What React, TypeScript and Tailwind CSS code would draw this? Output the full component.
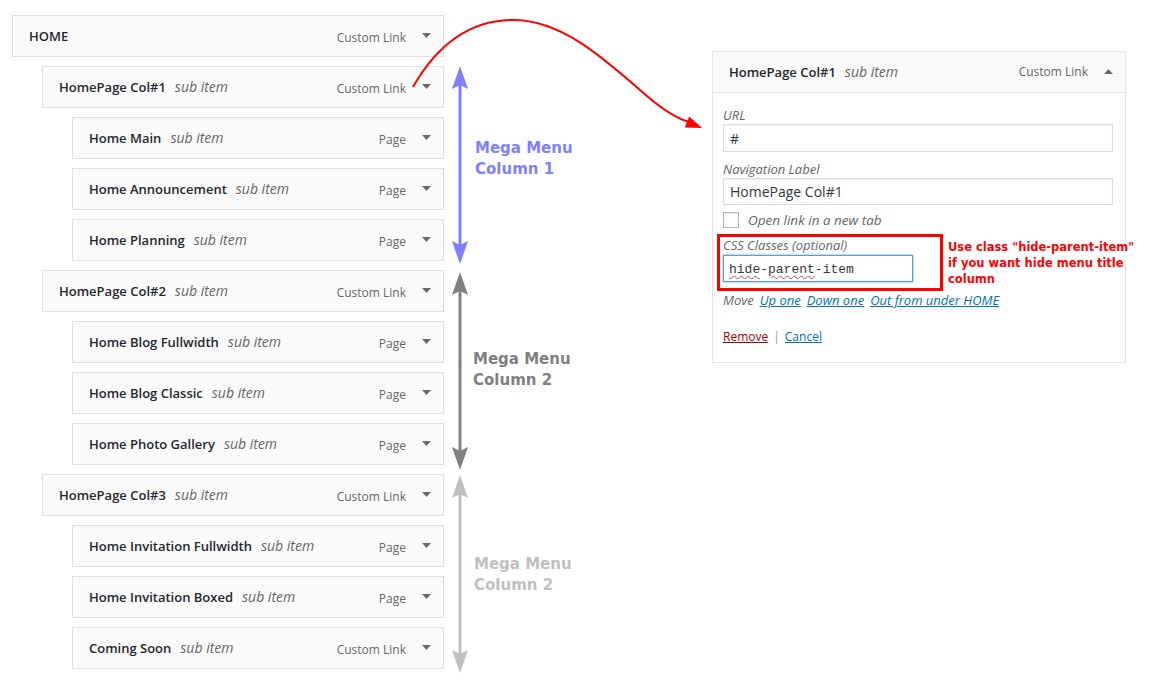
import React from "react";

type Item = { title: string; sub: boolean; type: string; level: number };

const items: Item[] = [
  { title: "HOME", sub: false, type: "Custom Link", level: 0 },
  { title: "HomePage Col#1", sub: true, type: "Custom Link", level: 1 },
  { title: "Home Main", sub: true, type: "Page", level: 2 },
  { title: "Home Announcement", sub: true, type: "Page", level: 2 },
  { title: "Home Planning", sub: true, type: "Page", level: 2 },
  { title: "HomePage Col#2", sub: true, type: "Custom Link", level: 1 },
  { title: "Home Blog Fullwidth", sub: true, type: "Page", level: 2 },
  { title: "Home Blog Classic", sub: true, type: "Page", level: 2 },
  { title: "Home Photo Gallery", sub: true, type: "Page", level: 2 },
  { title: "HomePage Col#3", sub: true, type: "Custom Link", level: 1 },
  { title: "Home Invitation Fullwidth", sub: true, type: "Page", level: 2 },
  { title: "Home Invitation Boxed", sub: true, type: "Page", level: 2 },
  { title: "Coming Soon", sub: true, type: "Custom Link", level: 2 },
];

const levelMargin = ["ml-0", "ml-[30px]", "ml-[60px]"];

const Caret = ({ up = false }: { up?: boolean }) => (
  <svg width="9" height="5" viewBox="0 0 9 5" className="shrink-0">
    <polygon points={up ? "0,5 9,5 4.5,0" : "0,0 9,0 4.5,5"} fill="#6b6b6b" />
  </svg>
);

const MenuItem = ({ item }: { item: Item }) => (
  <div
    className={`${levelMargin[item.level]} mb-[9px] h-[42px] border border-[#dfdfdf] bg-[#fafafa] flex items-center pl-4 pr-3`}
  >
    <span
      className={`${item.sub ? "pt-0" : "pt-[2px]"} text-[13px] font-semibold text-[#23282d] whitespace-nowrap`}
    >
      {item.title}
      {item.sub && (
        <span className="ml-[9px] text-[14px] font-normal italic text-[#666]">sub item</span>
      )}
    </span>
    <span className="ml-auto pt-[4px] text-[12px] text-[#666]">{item.type}</span>
    <span className="ml-4 -mt-[1px]">
      <Caret />
    </span>
  </div>
);

const DoubleArrow = ({ color, top, bottom }: { color: string; top: number; bottom: number }) => (
  <svg width="20" height="204" viewBox="0 0 20 204" className="shrink-0">
    <line x1="10" y1={top + 18} x2="10" y2={bottom - 18} stroke={color} strokeWidth="3" />
    <polygon points={`10,${top} 2,${top + 23} 10,${top + 19} 18,${top + 23}`} fill={color} />
    <polygon
      points={`10,${bottom} 2,${bottom - 23} 10,${bottom - 19} 18,${bottom - 23}`}
      fill={color}
    />
  </svg>
);

const groups = [
  { color: "#8080ff", text: "text-[#8080ff]", top: 0, bottom: 198, pt: "pt-[72px]", ml: "ml-[5px]", label: "Column 1" },
  { color: "#808080", text: "text-[#808080]", top: 2, bottom: 200, pt: "pt-[79px]", ml: "ml-[3px]", label: "Column 2" },
  { color: "#c0c0c0", text: "text-[#c0c0c0]", top: 1, bottom: 199, pt: "pt-[80px]", ml: "ml-[4px]", label: "Column 2" },
];

export default function App() {
  return (
    <div
      className="relative flex w-[1151px] h-[687px] bg-white overflow-hidden"
      style={{ fontFamily: '"Open Sans", sans-serif' }}
    >
      {/* menu structure */}
      <div className="w-[444px] shrink-0 pl-3 pt-[15px]">
        {items.map((it, i) => (
          <MenuItem key={i} item={it} />
        ))}
      </div>

      {/* column annotations */}
      <div className="w-[268px] shrink-0 pt-[66px] pl-[6px]">
        {groups.map((g, i) => (
          <div key={i} className="flex h-[204px]">
            <DoubleArrow color={g.color} top={g.top} bottom={g.bottom} />
            <div
              className={`${g.pt} ${g.ml} ${g.text} text-[15px] font-bold leading-[21px]`}
              style={{ fontFamily: '"DejaVu Sans", Verdana, sans-serif' }}
            >
              <div>Mega Menu</div>
              <div>{g.label}</div>
            </div>
          </div>
        ))}
      </div>

      {/* expanded item settings */}
      <div className="pt-[51px]">
        <div className="w-[414px] border border-[#e5e5e5] bg-white">
          <div className="h-[41px] bg-[#f9f9f9] border-b border-[#e5e5e5] flex items-center pl-4 pr-3">
            <span className="text-[13px] font-semibold text-[#23282d] whitespace-nowrap">
              HomePage Col#1
              <span className="ml-[9px] text-[14px] font-normal italic text-[#666]">sub item</span>
            </span>
            <span className="ml-auto text-[12px] text-[#666]">Custom Link</span>
            <span className="ml-4 -mt-[1px]">
              <Caret up />
            </span>
          </div>

          <div className="pl-[10px] pr-3 pt-[13px] pb-4 text-[13px]">
            <div className="italic text-[#666] leading-[18px]">URL</div>
            <div className="h-[28px] w-[390px] border border-[#ddd] shadow-[inset_0_1px_2px_rgba(0,0,0,0.07)] flex items-center pl-[6px] text-[14px] text-[#32373c]">
              #
            </div>

            <div className="mt-[8px] italic text-[#666] leading-[18px]">Navigation Label</div>
            <div className="h-[27px] w-[390px] border border-[#ddd] shadow-[inset_0_1px_2px_rgba(0,0,0,0.07)] flex items-center pl-[6px] text-[14px] text-[#32373c]">
              HomePage Col#1
            </div>

            <div className="mt-[7px] flex items-center h-4">
              <span className="w-4 h-4 border border-[#b4b9be] bg-white shadow-[inset_0_1px_2px_rgba(0,0,0,0.1)]" />
              <span className="ml-[9px] text-[13.5px] italic text-[#666]">Open link in a new tab</span>
            </div>

            <div className="mt-[6px] -ml-[6px] flex items-start">
              <div className="w-[226px] shrink-0 border-[3px] border-[#ff0000] pl-[3px] pb-[6px]">
                <div className="italic text-[#666] leading-[17px]">CSS Classes (optional)</div>
                <div
                  className="mt-[1px] h-[27px] w-[190px] border border-[#5b9dd9] shadow-[0_0_2px_rgba(30,140,190,0.8)] flex items-center pl-[5px] pt-[2px] text-[13px] text-[#32373c]"
                  style={{ fontFamily: '"Liberation Mono", monospace' }}
                >
                  <span className="underline decoration-wavy decoration-[#e04040] decoration-1 underline-offset-2">
                    hide
                  </span>
                  -
                  <span className="underline decoration-wavy decoration-[#e04040] decoration-1 underline-offset-2">
                    parent
                  </span>
                  -item
                </div>
              </div>
              <div
                className="ml-[5px] mt-[5px] text-[11.5px] font-bold leading-[16px] text-[#ff0000] whitespace-nowrap"
                style={{ fontFamily: '"DejaVu Sans", Verdana, sans-serif' }}
              >
                <div>Use class "hide-parent-item"</div>
                <div>if you want hide menu title</div>
                <div>column</div>
              </div>
            </div>

            <div className="leading-[18px] italic flex gap-[6px]">
              <span className="text-[#666]">Move</span>
              <a className="text-[#0073aa] underline">Up one</a>
              <a className="text-[#0073aa] underline">Down one</a>
              <a className="text-[#0073aa] underline">Out from under HOME</a>
            </div>

            <div className="mt-[19px] leading-[18px] text-[12px]">
              <a className="text-[#a00] underline">Remove</a>
              <span className="mx-[5px] text-[#999]">|</span>
              <a className="text-[#0073aa] underline">Cancel</a>
            </div>
          </div>
        </div>
      </div>

      {/* red pointer arrow overlaid across the columns */}
      <svg
        className="absolute left-0 top-0 pointer-events-none"
        width="1151"
        height="687"
        viewBox="0 0 1151 687"
      >
        <path
          d="M413 87 C 440 40, 475 20, 513 20 C 560 20, 600 55, 640 90 C 660 108, 675 118, 689 122"
          fill="none"
          stroke="#ff0000"
          strokeWidth="2"
        />
        <polygon points="702,128 684.8,127.6 689.2,116.4" fill="#ff0000" />
      </svg>
    </div>
  );
}
